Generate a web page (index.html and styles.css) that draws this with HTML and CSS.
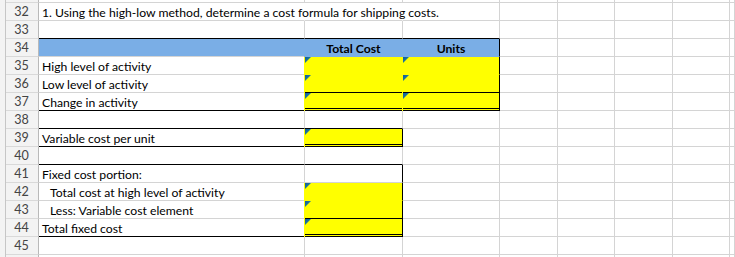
FILE: index.html
```html
<!DOCTYPE html>
<html>
<head>
<meta charset="utf-8">
<link rel="stylesheet" href="styles.css">
</head>
<body>
<div class="sheet">
  <div class="row part-top"><div class="frame"></div><div class="hd"></div><div class="c"></div><div class="c"></div><div class="c"></div><div class="c"></div><div class="c"></div><div class="c"></div><div class="c"></div><div class="c"></div></div>

  <div class="row"><div class="frame"></div><div class="hd">32</div><div class="c txt over nr">1. Using the high-low method, determine a cost formula for shipping costs.</div><div class="c nr"></div><div class="c"></div><div class="c"></div><div class="c"></div><div class="c"></div><div class="c"></div><div class="c"></div></div>

  <div class="row"><div class="frame"></div><div class="hd">33</div><div class="c bb"></div><div class="c bb"></div><div class="c bb"></div><div class="c"></div><div class="c"></div><div class="c"></div><div class="c"></div><div class="c"></div></div>

  <div class="row"><div class="frame"></div><div class="hd">34</div><div class="c blue"></div><div class="c blue bbl txt ctr"><b>Total Cost</b></div><div class="c blue bbl br txt ctr"><b>Units</b></div><div class="c"></div><div class="c"></div><div class="c"></div><div class="c"></div><div class="c"></div></div>

  <div class="row"><div class="frame"></div><div class="hd">35</div><div class="c txt">High level of activity</div><div class="c y t"></div><div class="c y t br"></div><div class="c"></div><div class="c"></div><div class="c"></div><div class="c"></div><div class="c"></div></div>

  <div class="row"><div class="frame"></div><div class="hd">36</div><div class="c txt">Low level of activity</div><div class="c y t bb"></div><div class="c y t br bb"></div><div class="c"></div><div class="c"></div><div class="c"></div><div class="c"></div><div class="c"></div></div>

  <div class="row"><div class="frame"></div><div class="hd">37</div><div class="c txt bb">Change in activity</div><div class="c y t dbl"></div><div class="c y t br dbl"></div><div class="c"></div><div class="c"></div><div class="c"></div><div class="c"></div><div class="c"></div></div>

  <div class="row"><div class="frame"></div><div class="hd">38</div><div class="c bb"></div><div class="c bb"></div><div class="c"></div><div class="c"></div><div class="c"></div><div class="c"></div><div class="c"></div><div class="c"></div></div>

  <div class="row"><div class="frame"></div><div class="hd">39</div><div class="c txt bb">Variable cost per unit</div><div class="c y t br dbl"></div><div class="c"></div><div class="c"></div><div class="c"></div><div class="c"></div><div class="c"></div><div class="c"></div></div>

  <div class="row"><div class="frame"></div><div class="hd">40</div><div class="c bb"></div><div class="c bb"></div><div class="c"></div><div class="c"></div><div class="c"></div><div class="c"></div><div class="c"></div><div class="c"></div></div>

  <div class="row"><div class="frame"></div><div class="hd">41</div><div class="c txt">Fixed cost portion:</div><div class="c br"></div><div class="c"></div><div class="c"></div><div class="c"></div><div class="c"></div><div class="c"></div><div class="c"></div></div>

  <div class="row"><div class="frame"></div><div class="hd">42</div><div class="c txt ind">Total cost at high level of activity</div><div class="c y t br"></div><div class="c"></div><div class="c"></div><div class="c"></div><div class="c"></div><div class="c"></div><div class="c"></div></div>

  <div class="row"><div class="frame"></div><div class="hd">43</div><div class="c txt ind">Less: Variable cost element</div><div class="c y t br bb"></div><div class="c"></div><div class="c"></div><div class="c"></div><div class="c"></div><div class="c"></div><div class="c"></div></div>

  <div class="row"><div class="frame"></div><div class="hd">44</div><div class="c txt bb">Total fixed cost</div><div class="c y t br dbl"></div><div class="c"></div><div class="c"></div><div class="c"></div><div class="c"></div><div class="c"></div><div class="c"></div></div>

  <div class="row"><div class="frame"></div><div class="hd">45</div><div class="c"></div><div class="c"></div><div class="c"></div><div class="c"></div><div class="c"></div><div class="c"></div><div class="c"></div><div class="c"></div></div>

  <div class="row part-bot"><div class="frame"></div><div class="hd"></div><div class="c"></div><div class="c"></div><div class="c"></div><div class="c"></div><div class="c"></div><div class="c"></div><div class="c"></div><div class="c"></div></div>
</div>
</body>
</html>
```

FILE: styles.css
```css
html, body {
  margin: 0;
  padding: 0;
  background: #ffffff;
}

.sheet {
  width: 735px;
  height: 257px;
  overflow: hidden;
  font-family: Lato, "Liberation Sans", sans-serif;
  font-size: 12.2px;
  color: #000;
}

.row {
  display: grid;
  grid-template-columns: 6px 33px 266px 98px 97px 58px 57px 58px 57px 1fr;
  height: 18px;
}

.row.part-top { height: 3px; }
.row.part-bot { height: 2px; }

.frame {
  background: #f3f3f3;
  border-right: 1px solid #c6c6c6;
}

.hd {
  box-sizing: border-box;
  background: #f3f3f3;
  border-right: 1px solid #b9b9b9;
  border-bottom: 1px solid #d9d9d9;
  color: #444;
  font-size: 12.6px;
  line-height: 17px;
  text-align: center;
  padding-right: 1px;
}

.c {
  box-sizing: border-box;
  position: relative;
  border-right: 1px solid #d4d4d4;
  border-bottom: 1px solid #d4d4d4;
}

.part-bot .c, .part-bot .hd { border-bottom: none; }

.txt {
  display: flex;
  align-items: flex-end;
  padding-left: 3px;
  line-height: 15px;
  white-space: nowrap;
}

.ctr { justify-content: center; padding-left: 0; }
.ind { padding-left: 11px; }
.over { overflow: visible; }
.nr { border-right-color: transparent; }

.blue {
  background: #7aaee6;
  border-right-color: #7aaee6;
}
.bbl { box-shadow: -1px 0 0 #7aaee6; border-bottom-color: #7aaee6; }

.y {
  background: #ffff00;
  border-right-color: #ffff00;
  border-bottom-color: #ffff00;
  box-shadow: -1px 0 0 #ffff00;
}

.t::before {
  content: "";
  position: absolute;
  left: 0;
  top: 0;
  width: 6px;
  height: 6px;
  clip-path: polygon(0 0, 100% 0, 0 100%);
  background: linear-gradient(135deg, #0f58a0 0%, #1f7f9c 60%, #2a9090 100%);
}

.bb { border-bottom: 1px solid #000; }
.br { border-right: 1px solid #000; }
.dbl { border-bottom: 3px double #000; }
```
